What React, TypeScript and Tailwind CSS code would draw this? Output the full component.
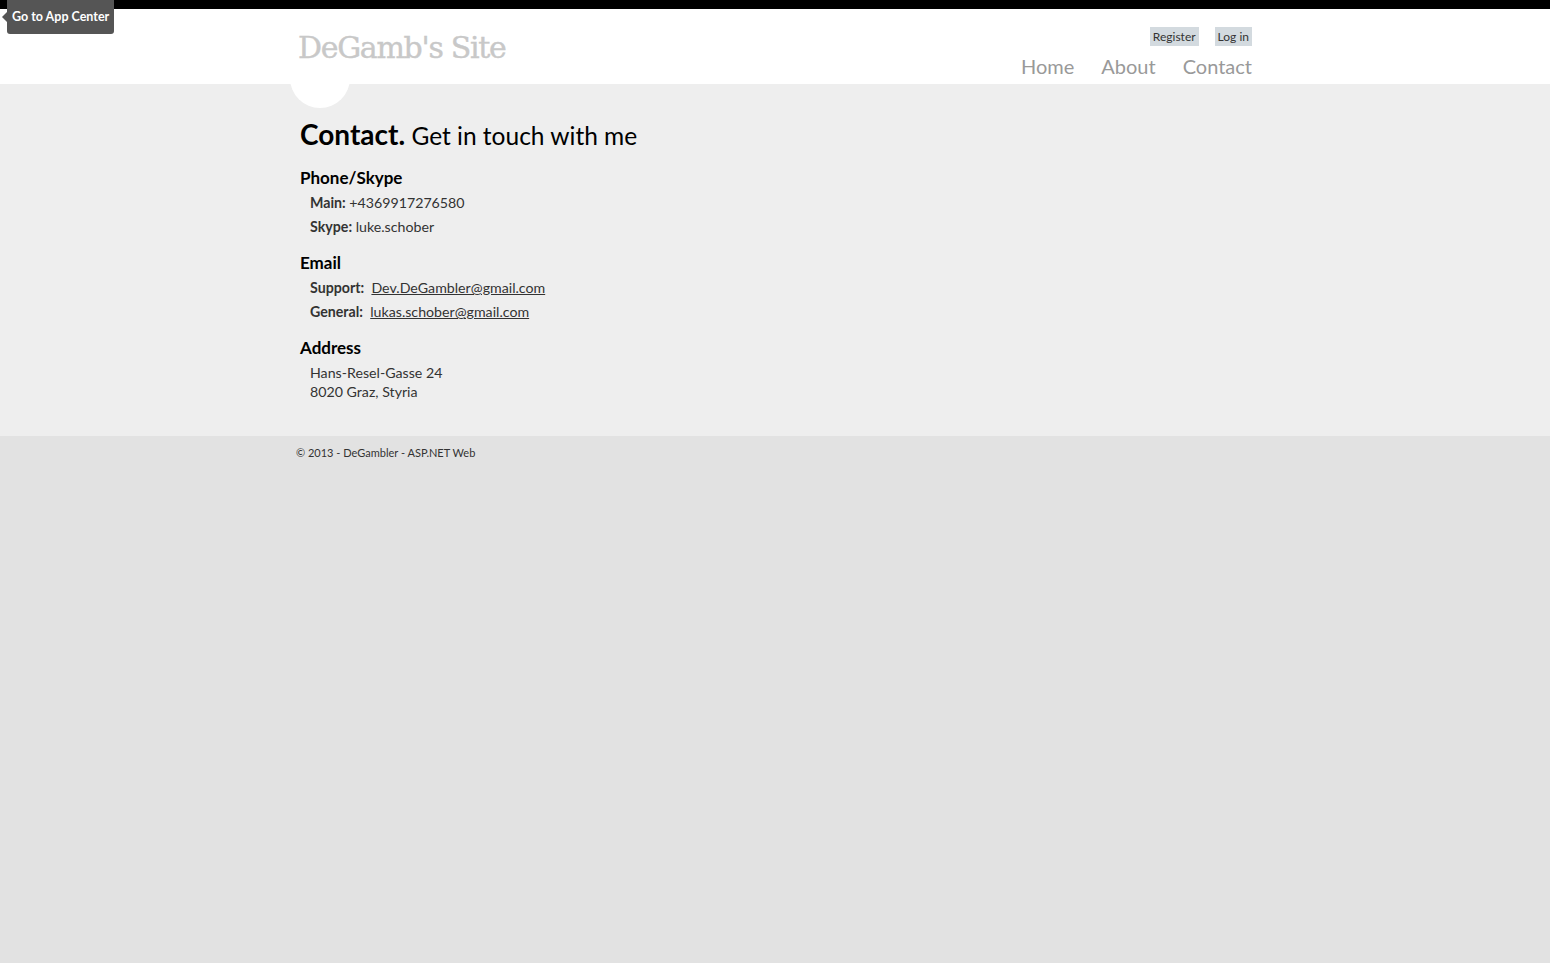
export default function App() {
  const font = { fontFamily: "'Segoe UI', Lato, 'Noto Sans', sans-serif" };

  return (
    <div className="min-h-[963px] bg-[#e2e2e2] text-[#333]" style={font}>
      {/* app center tab */}
      <div className="absolute left-[7px] top-0 z-20 flex h-[34px] items-center rounded-b-[3px] bg-[#555] px-[5px] text-[12.5px] font-bold text-white">
        <span className="absolute -left-[5px] top-[12px] h-0 w-0 border-y-[5px] border-r-[5px] border-y-transparent border-r-[#555]" />
        Go to App Center
      </div>

      <div className="h-[9px] bg-black" />

      <header className="bg-white">
        <div className="relative mx-auto flex h-[75px] w-[960px] justify-between pr-[3px]">
          <div className="absolute left-[-5px] top-[39px] h-[60px] w-[60px] rounded-full bg-white" />
          <div className="relative pl-[3px] pt-[16px] font-['Rockwell','DejaVu_Serif',serif] text-[30px] tracking-[-1.3px] text-[#c8c8c8] [-webkit-text-stroke:0.4px_#c8c8c8]">
            DeGamb's Site
          </div>
          <div className="flex flex-col items-end pt-[18px]">
            <div className="flex gap-4 text-[12px] text-[#333]">
              <span className="bg-[#d3dadf] px-[3px] leading-[19px]">Register</span>
              <span className="bg-[#d3dadf] px-[3px] leading-[19px]">Log in</span>
            </div>
            <nav className="mt-[8px] flex gap-[27px] text-[20px] leading-[24px] text-[#999]">
              <span>Home</span>
              <span>About</span>
              <span>Contact</span>
            </nav>
          </div>
        </div>
      </header>

      <main className="bg-[#eeeeee] pb-[35px]">
        <div className="mx-auto w-[960px] pl-[5px] pt-[32px]">
          <h1 className="text-[24.5px] leading-[36px] text-black">
            <span className="text-[28px] font-bold">Contact.</span> Get in touch with me
          </h1>

          <h3 className="mt-[13px] text-[17px] font-bold leading-[22px] text-black">Phone/Skype</h3>
          <div className="pl-[10px] text-[14.2px]">
            <p className="mt-[2px] leading-[24px]"><b>Main:</b> +4369917276580</p>
            <p className="leading-[24px]"><b>Skype:</b> luke.schober</p>
          </div>

          <h3 className="mt-[13px] text-[17px] font-bold leading-[22px] text-black">Email</h3>
          <div className="pl-[10px] text-[14.2px]">
            <p className="mt-[2px] leading-[24px]"><b>Support:</b>&nbsp; <a className="underline">Dev.DeGambler@gmail.com</a></p>
            <p className="leading-[24px]"><b>General:</b>&nbsp; <a className="underline">lukas.schober@gmail.com</a></p>
          </div>

          <h3 className="mt-[13px] text-[17px] font-bold leading-[22px] text-black">Address</h3>
          <div className="mt-[4px] pl-[10px] text-[14.2px] leading-[19px]">
            <p>Hans-Resel-Gasse 24</p>
            <p>8020 Graz, Styria</p>
          </div>
        </div>
      </main>

      <footer>
        <div className="mx-auto w-[960px] pl-[1px] pt-[9px] text-[11px] leading-[16px]">
          © 2013 - DeGambler - ASP.NET Web
        </div>
      </footer>
    </div>
  );
}
